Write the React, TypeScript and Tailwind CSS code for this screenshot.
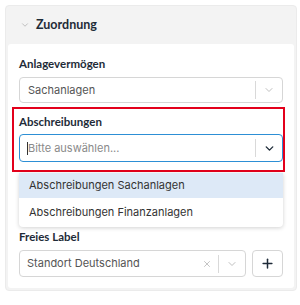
import { ChevronDown, X, Plus } from "lucide-react"

function Sep() {
  return <div className="h-[18px] w-px bg-[#d9d9d9]" />
}

const label = "text-[11.5px] leading-[16px] font-bold text-[#1e2b38] font-['Lato',sans-serif]"

export default function App() {
  return (
    <div className="h-[305px] w-[300px] bg-white pl-[5px] pt-[5px]" style={{ fontFamily: "Inter, 'Noto Sans', sans-serif" }}>
      <div className="flex h-[286px] w-[292px] flex-col rounded-[4px] border border-[#ebebeb] bg-[#f3f3f3]">
        {/* Header */}
        <div className="flex h-[38px] items-center gap-[6px] pl-[14px]">
          <ChevronDown className="h-[10px] w-[10px] text-[#b5b5b5]" strokeWidth={2} />
          <span className="font-['Lato',sans-serif] text-[12.5px] font-bold text-[#1e2b38]">Zuordnung</span>
        </div>

        {/* Body */}
        <div className="mx-[2px] mb-[2px] flex flex-1 flex-col rounded-[3px] bg-white px-[11px] pt-[12px]">
          <div className={label}>Anlagevermögen</div>
          <div className="mt-[5px] flex h-[26px] items-center rounded-[4px] border border-[#d6d6d6] pl-[8px]">
            <span className="flex-1 text-[11px] text-[#555]">Sachanlagen</span>
            <Sep />
            <div className="flex w-[26px] justify-center">
              <ChevronDown className="h-[12px] w-[12px] text-[#b8b8b8]" strokeWidth={1.8} />
            </div>
          </div>

          {/* Highlighted field */}
          <div className="-ml-[7px] -mr-[2px] mt-[4px] border-2 border-[#e3001b] pb-[8px] pl-[5px] pr-0 pt-[5px]">
            <div className={label}>Abschreibungen</div>
            <div className="mt-[4px] flex h-[28px] items-center rounded-[4px] border-[1.5px] border-[#2d8fd5] pl-[7px]">
              <span className="h-[13px] w-px bg-[#333]" />
              <span className="flex-1 text-[11px] text-[#8a8a8a]">Bitte auswählen...</span>
              <Sep />
              <div className="flex w-[26px] justify-center">
                <ChevronDown className="h-[13px] w-[13px] text-[#1e2b38]" strokeWidth={2.6} />
              </div>
            </div>
          </div>

          {/* Menu */}
          <div className="mt-[1px] overflow-hidden rounded-b-[4px] bg-white shadow-[0_1px_4px_rgba(0,0,0,0.18)]">
            <div className="flex h-[25px] items-center bg-[#dde9f7] px-[10px] text-[11px] text-[#333]">Abschreibungen Sachanlagen</div>
            <div className="flex h-[29px] items-center px-[10px] text-[11px] text-[#333]">Abschreibungen Finanzanlagen</div>
          </div>

          <div className={`mt-[2px] ${label}`}>Freies Label</div>
          <div className="mt-[5px] flex gap-[6px]">
            <div className="flex h-[27px] flex-1 items-center rounded-[4px] border border-[#d6d6d6] pl-[7px]">
              <span className="flex-1 text-[11px] text-[#555]">Standort Deutschland</span>
              <X className="mr-[6px] h-[10px] w-[10px] text-[#b8b8b8]" strokeWidth={2} />
              <Sep />
              <div className="flex w-[26px] justify-center">
                <ChevronDown className="h-[12px] w-[12px] text-[#b8b8b8]" strokeWidth={1.8} />
              </div>
            </div>
            <button className="flex h-[27px] w-[31px] items-center justify-center rounded-[4px] border border-[#d6d6d6] bg-white">
              <Plus className="h-[15px] w-[15px] text-[#1e2b38]" strokeWidth={2.4} />
            </button>
          </div>
        </div>
      </div>
    </div>
  )
}
